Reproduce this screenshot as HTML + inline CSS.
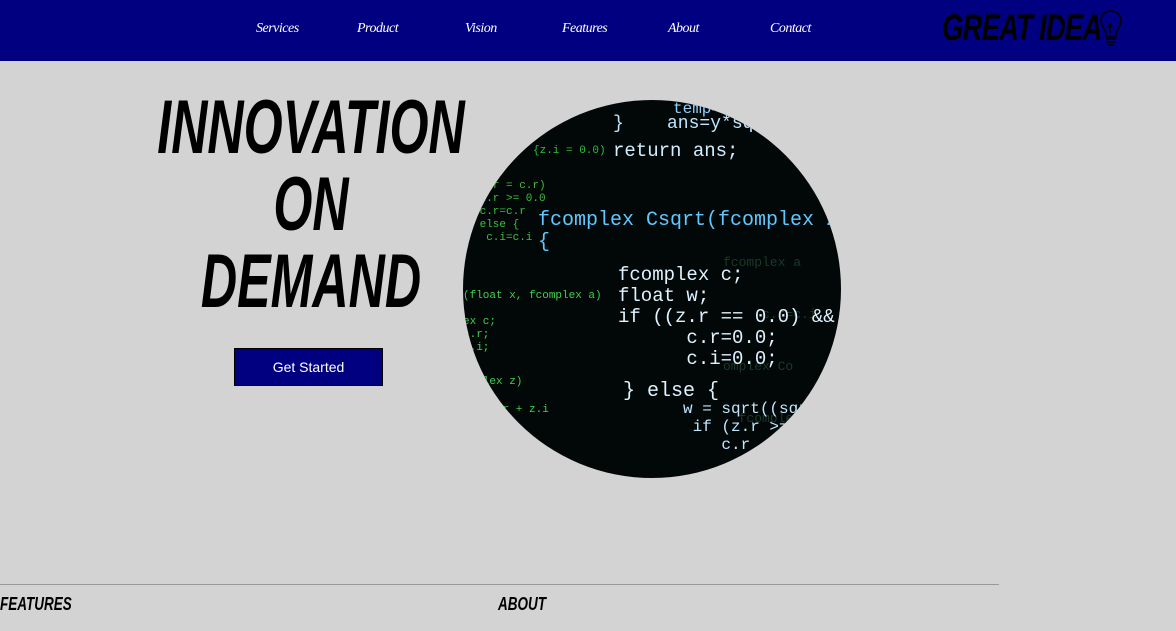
<!DOCTYPE html>
<html><head><style>
body{margin:0;width:1176px;height:631px;background:#d3d3d3;overflow:hidden;position:relative;font-family:"Liberation Sans",sans-serif}
.nav{position:absolute;left:0;top:0;width:1176px;height:61px;background:#000080}
.nav a{position:absolute;top:21px;color:#fff;font-family:"Liberation Serif",serif;font-style:italic;font-size:14px;text-decoration:none;letter-spacing:-0.5px}
.logo{position:absolute;left:942px;top:7px;font-weight:bold;font-style:italic;font-size:37px;color:#000;letter-spacing:-1px;transform:scaleX(0.74);transform-origin:left;white-space:nowrap}
.h{position:absolute;left:0;width:622px;text-align:center;font-weight:bold;font-style:italic;font-size:76px;line-height:76px;color:#000;transform:scaleX(0.66);transform-origin:center}
.btn{position:absolute;left:234px;top:348px;width:147px;height:36px;background:#000080;border:1px solid #000;color:#fff;font-size:14px;text-align:center;line-height:36px}
.circle{position:absolute;left:463px;top:100px;width:378px;height:378px;border-radius:50%;background:#020807;overflow:hidden;font-family:"Liberation Mono",monospace}
.circle div{position:absolute;white-space:pre}
.line{position:absolute;left:0;top:584px;width:999px;height:1px;background:#999}
.ft{position:absolute;top:594px;font-weight:bold;font-style:italic;font-size:18px;color:#000;transform:scaleX(0.75);transform-origin:left}
</style></head><body>
<div class="nav">
<a style="left:256px">Services</a><a style="left:357px">Product</a><a style="left:465px">Vision</a><a style="left:562px">Features</a><a style="left:668px">About</a><a style="left:770px">Contact</a>
<div class="logo">GREAT IDEA</div>
<svg style="position:absolute;left:1098px;top:9px" width="26" height="38" viewBox="0 0 26 38" fill="none" stroke="#000" stroke-width="1.5"><path d="M13 2c-6 0-10 4-10 10 0 5 4 8 5 12v4h10v-4c1-4 5-7 5-12 0-6-4-10-10-10z"/><path d="M9 18l3-3 2 3M12 15v9"/><path d="M8 30h10M8 33h10M10 36h6"/></svg>
</div>
<div class="h" style="top:90px">INNOVATION</div>
<div class="h" style="top:167px">ON</div>
<div class="h" style="top:244px">DEMAND</div>
<div class="btn">Get Started</div>
<div class="circle">
<div style="left:210px;top:0;color:#8fd0ff;font-size:16px">temp=x/y;</div>
<div style="left:150px;top:14px;color:#bfe6ff;font-size:18px">}    ans=y*sqrt(1.0+temp*temp</div>
<div style="left:150px;top:40px;color:#d0eeff;font-size:19px">return ans;</div>
<div style="left:70px;top:45px;color:#2fbf3f;font-size:11px">{z.i = 0.0)</div>
<div style="left:10px;top:80px;color:#3fbf3f;font-size:11px;line-height:13px">(z.r = c.r)<br> z.r &gt;= 0.0<br> c.r=c.r<br> else {<br>  c.i=c.i</div>
<div style="left:75px;top:110px;color:#5fc8ff;font-size:20px;line-height:22px">fcomplex Csqrt(fcomplex z)<br>{</div>
<div style="left:260px;top:150px;color:#1a3a2a;font-size:13px;line-height:26px">fcomplex a<br><br>     c.r=c.i<br><br>omplex Co<br><br>  fcomplex</div>
<div style="left:155px;top:165px;color:#dff2ff;font-size:19px;line-height:21px">fcomplex c;<br>float w;<br>if ((z.r == 0.0) &amp;&amp; (z.i == 0.0)) {<br>      c.r=0.0;<br>      c.i=0.0;</div>
<div style="left:0;top:190px;color:#3fd04f;font-size:11px;line-height:13px">(float x, fcomplex a)<br><br>ex c;<br>a.r;<br>a.i;<br>c;</div>
<div style="left:160px;top:280px;color:#dff2ff;font-size:20px">} else {</div>
<div style="left:0;top:275px;color:#3fd04f;font-size:11px;line-height:14px">omplex z)<br><br>z.r=z.r + z.i</div>
<div style="left:220px;top:300px;color:#bfe6ff;font-size:16px;line-height:18px">w = sqrt((sqrt(z.r*z.r<br> if (z.r &gt;= 0.0) {<br>    c.r</div>
</div>
<div class="line"></div>
<div class="ft" style="left:0">FEATURES</div>
<div class="ft" style="left:498px">ABOUT</div>
</body></html>
